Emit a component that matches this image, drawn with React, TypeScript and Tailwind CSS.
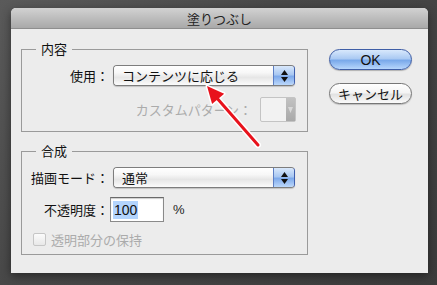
import React from "react";

const jp = "font-['Noto_Sans_CJK_JP','Noto_Sans',sans-serif]";
const lat = "font-['Liberation_Sans',Arial,sans-serif]";

function Stepper() {
  return (
    <div className="w-[21px] h-full flex flex-col items-center justify-center gap-[2px] border-l border-[#5d7fc4] bg-[linear-gradient(#d9e8fb,#a9c8f2_45%,#7eaaeb_55%,#bcd8fb)] rounded-r-[3px]">
      <svg width="7" height="5" viewBox="0 0 7 5"><path d="M3.5 0 L7 5 L0 5 Z" fill="#111" /></svg>
      <svg width="7" height="5" viewBox="0 0 7 5"><path d="M0 0 L7 0 L3.5 5 Z" fill="#111" /></svg>
    </div>
  );
}

function Popup({ text }: { text: string }) {
  return (
    <div className="flex h-[21px] w-[182px] rounded-[4px] border border-[#7d7d7d] border-r-[#3f5fae] shadow-[0_1px_1px_rgba(0,0,0,0.18)] overflow-hidden">
      <div className={`flex-1 flex items-center pl-[8px] text-[13px] leading-none text-[#111] bg-[linear-gradient(#ffffff,#f7f7f7_35%,#e6e6e6_60%,#fbfbfb)] ${jp}`}>
        {text}
      </div>
      <Stepper />
    </div>
  );
}

function Group({ label, children }: { label: string; children: React.ReactNode }) {
  return (
    <div className="relative border border-[#9a9a9a]">
      <span className={`absolute left-[14px] top-[-9px] px-[5px] bg-[#ececec] text-[13px] leading-[16px] text-[#111] ${jp}`}>
        {label}
      </span>
      {children}
    </div>
  );
}

export default function App() {
  return (
    <div className="relative w-[437px] h-[285px] overflow-hidden bg-[linear-gradient(135deg,#5a5a5a,#484848_40%,#3c3c3c)] pt-[8px] pl-[11px]">
      <div className="w-[417px] h-[265px] flex flex-col bg-[#ececec] rounded-t-[5px] shadow-[0_3px_10px_rgba(0,0,0,0.45)]">
        {/* Title bar */}
        <div className={`h-[21px] flex items-center justify-center rounded-t-[5px] border-b border-[#8e8e8e] bg-[linear-gradient(#d2d2d2,#bdbdbd_50%,#a9a9a9)] text-[13px] leading-none text-[#222] ${jp}`}>
          塗りつぶし
        </div>
        {/* Body */}
        <div className="flex pl-[10px] pt-[20px]">
          <div className="w-[287px] flex flex-col gap-[19px]">
            <Group label="内容">
              <div className="pt-[15px] pb-[9px] flex flex-col gap-[11px]">
                <div className="flex items-center">
                  <div className={`w-[87px] text-right text-[13px] leading-none text-[#111] ${jp}`}>使用：</div>
                  <div className="ml-[4px]"><Popup text="コンテンツに応じる" /></div>
                </div>
                <div className="flex items-center justify-end pr-[11px]">
                  <div className={`text-[13px] leading-none text-[#ababab] ${jp}`}>カスタムパターン：</div>
                  <div className="ml-[8px] w-[36px] h-[25px] flex border border-[#c4c4c4] bg-[#f2f2f2] rounded-[2px]">
                    <div className="flex-1" />
                    <div className="w-[9px] flex items-center justify-center bg-[linear-gradient(#c2c2c2,#a9a9a9)]">
                      <svg width="5" height="6" viewBox="0 0 5 6"><path d="M0 0 L5 0 L2.5 6 Z" fill="#d8d8d8" /></svg>
                    </div>
                  </div>
                </div>
              </div>
            </Group>
            <Group label="合成">
              <div className="pt-[15px] pb-[8px] flex flex-col">
                <div className="flex items-center">
                  <div className={`w-[87px] text-right text-[13px] leading-none text-[#111] ${jp}`}>描画モード：</div>
                  <div className="ml-[4px]"><Popup text="通常" /></div>
                </div>
                <div className="flex items-center mt-[9px]">
                  <div className={`w-[87px] text-right text-[13px] leading-none text-[#111] ${jp}`}>不透明度：</div>
                  <div className="ml-[1px] w-[54px] h-[25px] flex items-center pl-[2px] bg-white border border-[#8a8a8a] border-t-[#6a6a6a] shadow-[inset_0_1px_1px_rgba(0,0,0,0.2)]">
                    <span className={`bg-[#b3d4fd] px-[1px] h-[18px] flex items-center text-[14px] leading-none text-[#111] ${lat}`}>100</span>
                  </div>
                  <span className={`ml-[9px] text-[13px] leading-none text-[#222] ${lat}`}>%</span>
                </div>
                <div className="flex items-center mt-[11px] pl-[11px]">
                  <div className="w-[13px] h-[13px] rounded-[2px] border border-[#c6c6c6] bg-[linear-gradient(#fbfbfb,#e8e8e8)]" />
                  <span className={`ml-[5px] text-[13px] leading-none text-[#ababab] ${jp}`}>透明部分の保持</span>
                </div>
              </div>
            </Group>
          </div>
          <div className="ml-[21px] flex flex-col gap-[13px]">
            <div className={`w-[83px] h-[21px] rounded-full border border-[#3f5ea6] flex items-center justify-center bg-[linear-gradient(#d8e8fc,#abcaf3_45%,#7aa9ea_55%,#b7d6fc)] shadow-[0_1px_1px_rgba(0,0,0,0.25)] text-[14px] leading-none text-[#111] ${lat}`}>
              OK
            </div>
            <div className={`w-[83px] h-[21px] rounded-full border border-[#767676] flex items-center justify-center bg-[linear-gradient(#ffffff,#f4f4f4_45%,#e2e2e2_55%,#fafafa)] shadow-[0_1px_1px_rgba(0,0,0,0.2)] text-[13px] leading-none text-[#111] ${jp}`}>
              キャンセル
            </div>
          </div>
        </div>
      </div>
      {/* Red arrow annotation */}
      <svg className="absolute left-0 top-0 pointer-events-none" width="437" height="285" viewBox="0 0 437 285">
        <line x1="258" y1="145" x2="216" y2="97" stroke="#fff" strokeWidth="6" strokeLinecap="round" />
        <path d="M207 86 L212.1 104.1 L224.2 93.7 Z" fill="#fff" stroke="#fff" strokeWidth="3" strokeLinejoin="round" />
        <line x1="258" y1="145" x2="216" y2="97" stroke="#e8121c" strokeWidth="3" strokeLinecap="round" />
        <path d="M207 86 L212.1 104.1 L224.2 93.7 Z" fill="#e8121c" />
      </svg>
    </div>
  );
}
